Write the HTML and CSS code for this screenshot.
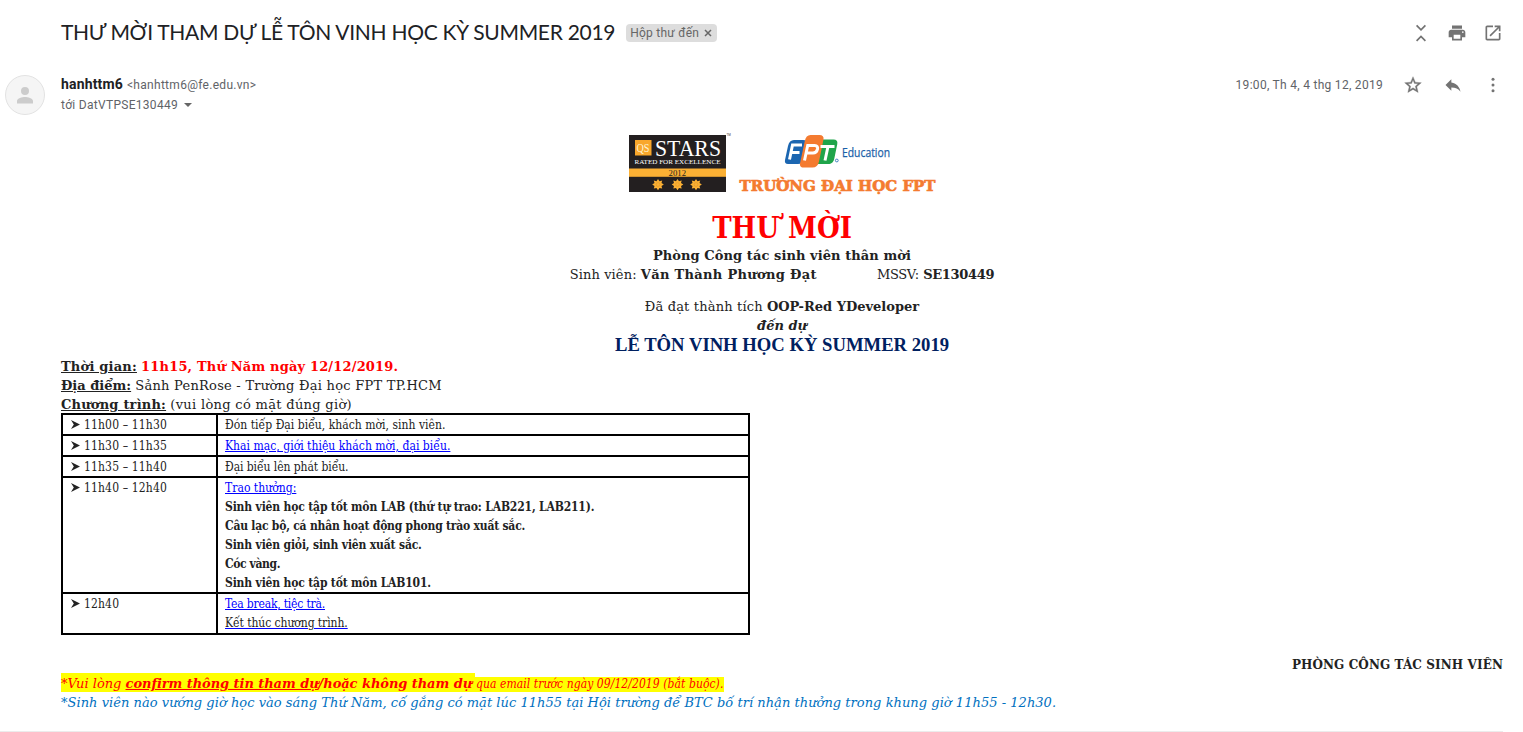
FILE: index.html
```html
<!DOCTYPE html>
<html lang="vi">
<head>
<meta charset="utf-8">
<title>THƯ MỜI THAM DỰ LỄ TÔN VINH HỌC KỲ SUMMER 2019</title>
<link rel="stylesheet" href="styles.css">
</head>
<body>
<main class="thread">
  <header class="subject-row">
    <h1 class="subject">THƯ MỜI THAM DỰ LỄ TÔN VINH HỌC KỲ SUMMER 2019</h1>
    <span class="chip"><span class="chip-label">Hộp thư đến</span><svg class="chip-x" viewBox="0 0 8 8"><path d="M1 1l6 6M7 1L1 7"/></svg></span>
    <div class="actions">
      <svg class="icon collapse" viewBox="0 0 20 20"><path d="M5.600 2.400L10 6.800l4.400-4.400M5.600 17.800L10 13.400l4.400 4.400"/></svg>
      <svg class="icon" viewBox="0 0 24 24"><path d="M19 8H5c-1.660 0-3 1.340-3 3v6h4v4h12v-4h4v-6c0-1.660-1.340-3-3-3zm-3 11H8v-5h8v5zm3-7c-.55 0-1-.45-1-1s.45-1 1-1 1 .45 1 1-.45 1-1 1zm-1-9H6v4h12V3z"/></svg>
      <svg class="icon" viewBox="0 0 24 24"><path d="M19 19H5V5h7V3H5c-1.110 0-2 .9-2 2v14c0 1.100.89 2 2 2h14c1.100 0 2-.9 2-2v-7h-2v7zM14 3v2h3.590l-9.830 9.830 1.410 1.410L19 6.410V10h2V3h-7z"/></svg>
    </div>
  </header>

  <section class="sender-row">
    <svg class="avatar" viewBox="0 0 40 40"><circle cx="20" cy="20" r="19.5"/><path d="M20 20a4 4 0 1 0 0-8 4 4 0 0 0 0 8zm0 2c-2.700 0-8 1.300-8 4v2.500h16V26c0-2.700-5.300-4-8-4z"/></svg>
    <div class="sender">
      <div class="from"><b>hanhttm6</b> <span class="address">&lt;hanhttm6@fe.edu.vn&gt;</span></div>
      <div class="to">tới DatVTPSE130449<svg class="caret" viewBox="0 0 8 4"><path d="M0 0h8L4 4z"/></svg></div>
    </div>
    <div class="meta">
      <span class="date">19:00, Th 4, 4 thg 12, 2019</span>
      <svg class="icon" viewBox="0 0 24 24"><path d="M22 9.240l-7.190-.62L12 2 9.190 8.630 2 9.240l5.460 4.730L5.820 21 12 17.270 18.180 21l-1.630-7.030L22 9.240zM12 15.400l-3.760 2.270 1-4.280-3.320-2.880 4.380-.38L12 6.100l1.710 4.040 4.380.38-3.320 2.880 1 4.280L12 15.400z" stroke="#737373" stroke-width=".4"/></svg>
      <svg class="icon" viewBox="0 0 24 24"><path d="M10 9V5l-7 7 7 7v-4.100c5 0 8.500 1.600 11 5.100-1-5-4-10-11-11z"/></svg>
      <svg class="icon" viewBox="0 0 20 20"><circle cx="10" cy="4.300" r="1.500"/><circle cx="10" cy="10" r="1.500"/><circle cx="10" cy="15.700" r="1.500"/></svg>
    </div>
  </section>

  <article class="letter">
    <div class="banner">
      <svg class="logos" viewBox="625 128 315 72">
        <rect x="629" y="135" width="97" height="34" fill="#231f20"/>
        <rect x="629" y="168.500" width="97" height="8.500" fill="#fbb034"/>
        <rect x="629" y="176.800" width="97" height="15.200" fill="#231f20"/>
        <rect x="635" y="140" width="16.500" height="15.500" fill="#f9a72b"/>
        <text class="qs" x="636.500" y="152" textLength="13" lengthAdjust="spacingAndGlyphs">QS</text>
        <text class="stars" x="655" y="155.500" textLength="66" lengthAdjust="spacingAndGlyphs">STARS</text>
        <text class="rated" x="634.500" y="163.500" textLength="86" lengthAdjust="spacingAndGlyphs">RATED FOR EXCELLENCE</text>
        <text class="year" x="668.500" y="175.500" textLength="17.500" lengthAdjust="spacingAndGlyphs">2012</text>
        <text class="tm" x="726.500" y="136">TM</text>
        <g fill="#fbb034">
          <path id="badge" d="M658 179l1.500 2.200 2.700-.8-.7 2.500 2.300 1.600-2.300 1.600.7 2.500-2.700-.7-1.500 2.300-1.500-2.300-2.700.7.7-2.500-2.300-1.600 2.300-1.600-.7-2.500 2.700.8z"/>
          <use href="#badge" x="19.500"/><use href="#badge" x="38"/>
        </g>
        <g fill="none" stroke="#e39a2a" stroke-width=".7"><circle cx="658" cy="184.500" r="1.900"/><circle cx="677.500" cy="184.500" r="1.900"/><circle cx="696" cy="184.500" r="1.900"/></g>
        <path fill="#1b66b1" d="M794 140h9c3 0 4.500 1.500 4 4l-3 15c-.7 3.500-3 5-6 5h-10c-2.500 0-3.500-1.500-3-4l3-14c.8-4 3-6 6-6z"/>
        <path fill="#1fa44a" d="M823 139.500h10.500c3 0 4.300 1.500 3.800 4.500l-3 14.500c-.8 4-3 5.500-6 5.500H817l4-19c.5-2.500 0-5 2-5.500z"/>
        <path fill="#f47b30" d="M810.500 135h9c3 0 4.500 1.700 4 4.500l-4.500 22c-.8 4-3 6-6.500 6h-9c-3 0-4-1.800-3.400-4.500l4.700-22c.8-4 2.700-6 5.700-6z"/>
        <g fill="none" stroke="#fff" stroke-width="3">
          <path d="M789.500 159.500l3-14.500h9.500M791 152.500h8.500"/>
          <path d="M804.500 160.500l3.200-15h7c2.500 0 3.300 1.500 2.800 3.700-.6 2.600-2 3.800-4.500 3.800h-6"/>
          <path d="M820.500 146.500h14M828 146.500l-3 14"/>
        </g>
        <circle cx="836.800" cy="160.500" r="1.400" fill="none" stroke="#1b66b1" stroke-width=".8"/>
        <text class="education" x="842" y="157" textLength="48" lengthAdjust="spacingAndGlyphs">Education</text>
        <text class="school" x="739.500" y="191" textLength="196" lengthAdjust="spacingAndGlyphs">TRƯỜNG ĐẠI HỌC FPT</text>
      </svg>
    </div>
    <h2 class="invite">THƯ MỜI</h2>
    <div class="centered">
      <p><b class="t8">Phòng Công tác sinh viên thân mời</b></p>
      <p class="person"><span><span class="t11">Sinh viên:</span> <b class="t32">Văn Thành Phương Đạt</b></span><span class="code">MSSV: <b>SE130449</b></span></p>
      <p class="award"><span class="t17">Đã đạt thành tích</span> <b>OOP-Red YDeveloper</b></p>
      <p><b><i>đến dự</i></b></p>
      <p class="event">LỄ TÔN VINH HỌC KỲ SUMMER 2019</p>
    </div>
    <p><b class="t20"><u>Thời gian:</u></b> <b class="t17 red">11h15, Thứ Năm ngày 12/12/2019.</b></p>
    <p><b><u>Địa điểm:</u></b> <span class="t25">Sảnh PenRose - Trường Đại học FPT TP.HCM</span></p>
    <p><b class="t20"><u>Chương trình:</u></b> <span class="t32">(vui lòng có mặt đúng giờ)</span></p>
    <table class="agenda">
      <tr><td class="time"><svg class="bullet" viewBox="0 0 9 9"><path d="M0 0l9 4.500L0 9l2.800-4.500z"/></svg>11h00 – 11h30</td><td>Đón tiếp Đại biểu, khách mời, sinh viên.</td></tr>
      <tr><td class="time"><svg class="bullet" viewBox="0 0 9 9"><path d="M0 0l9 4.500L0 9l2.800-4.500z"/></svg>11h30 – 11h35</td><td><u class="link">Khai mạc, giới thiệu khách mời, đại biểu.</u></td></tr>
      <tr><td class="time"><svg class="bullet" viewBox="0 0 9 9"><path d="M0 0l9 4.500L0 9l2.800-4.500z"/></svg>11h35 – 11h40</td><td class="tight">Đại biểu lên phát biểu.</td></tr>
      <tr><td class="time"><svg class="bullet" viewBox="0 0 9 9"><path d="M0 0l9 4.500L0 9l2.800-4.500z"/></svg>11h40 – 12h40</td><td><u class="link">Trao thưởng:</u>
        <div class="awards">
          <p>Sinh viên học tập tốt môn LAB (thứ tự trao: LAB221, LAB211).</p>
          <p class="club">Câu lạc bộ, cá nhân hoạt động phong trào xuất sắc.</p>
          <p>Sinh viên giỏi, sinh viên xuất sắc.</p>
          <p class="toad">Cóc vàng.</p>
          <p>Sinh viên học tập tốt môn LAB101.</p>
        </div></td></tr>
      <tr class="last"><td class="time"><svg class="bullet" viewBox="0 0 9 9"><path d="M0 0l9 4.500L0 9l2.800-4.500z"/></svg>12h40</td><td><p class="tea"><u class="link">Tea break, tiệc trà.</u></p><p class="tight"><u class="link"><span class="dark">Kết thúc chương trình.</span></u></p></td></tr>
    </table>
    <p class="signature">PHÒNG CÔNG TÁC SINH VIÊN</p>
    <p class="notice"><span class="mark">*Vui lòng <b class="narrow"><u>confirm thông tin tham dự</u>/hoặc không tham dự</b></span><span class="mark small">qua email trước ngày 09/12/2019 (bắt buộc).</span></p>
    <p class="note">*Sinh viên nào vướng giờ học vào sáng Thứ Năm, cố gắng có mặt lúc 11h55 tại Hội trường để BTC bố trí nhận thưởng trong khung giờ 11h55 - 12h30.</p>
  </article>
</main>
</body>
</html>
```

FILE: styles.css
```css
body {
  margin: 0;
  background: #fff;
  color: #222;
  font-family: Roboto, "Liberation Sans", sans-serif;
}

p, h1, h2 { margin: 0; font-weight: inherit; }

.thread {
  box-sizing: border-box;
  width: 1503px;
  height: 732px;
  border-bottom: 1px solid #ececec;
}

.subject-row {
  display: flex;
  align-items: center;
  height: 66px;
  padding-left: 61px;
}
.subject {
  padding-bottom: 2px;
  font: 400 21px/28px Lato, sans-serif;
  letter-spacing: -.29px;
  color: #202124;
  white-space: nowrap;
}
.chip {
  display: flex;
  align-items: center;
  box-sizing: border-box;
  width: 91px;
  height: 18px;
  margin-left: 11px;
  padding: 0 5px 0 4px;
  justify-content: space-between;
  border-radius: 4px;
  background: #ddd;
  color: #666;
  font-size: 12px;
  letter-spacing: .25px;
}
.chip-x { width: 8px; height: 8px; fill: none; stroke: #666; stroke-width: 1.5; }

.actions { display: flex; gap: 16px; margin-left: auto; }
.icon { width: 20px; height: 20px; fill: #737373; display: block; }
.collapse { fill: none; stroke: #737373; stroke-width: 1.7; }

.sender-row { display: flex; height: 60px; padding-left: 5px; }
.avatar { width: 40px; height: 40px; margin-top: 9px; fill: #ccc; }
.avatar circle { fill: #f5f5f5; stroke: #e2e2e2; }
.sender { margin: 8px 0 0 16px; line-height: 20px; }
.from b { font-size: 14px; letter-spacing: .17px; color: #202124; }
.address, .to, .date { font-size: 12px; letter-spacing: .29px; color: #5f6368; }
.caret { width: 8px; height: 4px; margin: 0 0 2px 6px; fill: #666; }
.meta { display: flex; align-items: center; gap: 20px; height: 20px; margin: 9px 0 0 auto; }

.letter {
  padding-left: 61px;
  font: 13px/17px "DejaVu Serif", serif;
}
.letter p { padding-top: 2px; white-space: nowrap; }
.banner { display: flex; justify-content: center; height: 81px; padding-top: 2px; box-sizing: border-box; }
.logos { width: 315px; height: 72px; overflow: visible; }
.logos text { font-family: "Liberation Serif", serif; }
.logos .qs { font-size: 12px; fill: #fff3d0; }
.logos .stars { font-size: 23px; fill: #fff; }
.logos .rated { font-size: 7px; fill: #fff; }
.logos .year { font-size: 9px; fill: #231f20; }
.logos .tm { font: 3px "Liberation Sans", sans-serif; fill: #333; }
.logos .education { font: 500 12px "Open Sans", sans-serif; fill: #1b5fa8; stroke: #1b5fa8; stroke-width: .25; }
.logos .school { font: bold 15.5px "DejaVu Serif", serif; fill: #f47b30; stroke: #f47b30; stroke-width: .7; }

.invite {
  height: 38px;
  font: bold 29px/42px "DejaVu Serif Condensed", "DejaVu Serif", serif;
  text-align: center;
  color: #f00;
}
.centered { text-align: center; }
.person { display: flex; justify-content: center; gap: 60px; }
.code { letter-spacing: -.3px; word-spacing: .6px; }
.award { margin-top: 13px; }
.letter .event { padding-top: 0; font: bold 18.67px/22px "Liberation Serif", serif; color: #002060; }
.red { color: #f00; }

.agenda {
  width: 689px;
  table-layout: fixed;
  border-collapse: collapse;
  font: 12px/17px "DejaVu Serif Condensed", "DejaVu Serif", serif;
  letter-spacing: .03px;
}
.agenda td { padding: 2px 7px 0; border: 2px solid #000; vertical-align: top; }
.agenda .time { width: 138px; padding: 2px 7px 0 8px; letter-spacing: .145px; }
.bullet { width: 9px; height: 9px; margin-right: 4px; fill: #222; }
.link { color: #00f; }
.dark { color: #222; }
.awards { font-weight: bold; letter-spacing: -.168px; }
.club { letter-spacing: -.22px; }
.toad { letter-spacing: -.39px; }
.agenda .tea { padding-top: 0; letter-spacing: -.19px; }
.agenda .tight { letter-spacing: -.07px; }
.last { height: 41px; }

.letter .signature {
  margin-top: 19px;
  padding-top: 3px;
  text-align: right;
  font-weight: bold;
  font-size: 12px;
  line-height: 16px;
  letter-spacing: .1px;
}
.letter .notice { display: flex; align-items: baseline; padding-top: 0; font-style: italic; color: #f00; }
.mark { box-sizing: border-box; width: 414px; padding-top: 2px; background: #ff0; }
.small {
  width: 249px;
  padding: 0 0 0 1px;
  font: italic 12px/15px "DejaVu Serif Condensed", "DejaVu Serif", serif;
  letter-spacing: .07px;
}
.note { font-style: italic; color: #0070c0; letter-spacing: .035px; }

/* letter tracking, in hundredths of a pixel */
.narrow { letter-spacing: -.06px; }
.t8 { letter-spacing: .08px; }
.t11 { letter-spacing: .11px; }
.t17 { letter-spacing: .17px; }
.t20 { letter-spacing: .2px; }
.t25 { letter-spacing: .25px; }
.t32 { letter-spacing: .32px; }
```
